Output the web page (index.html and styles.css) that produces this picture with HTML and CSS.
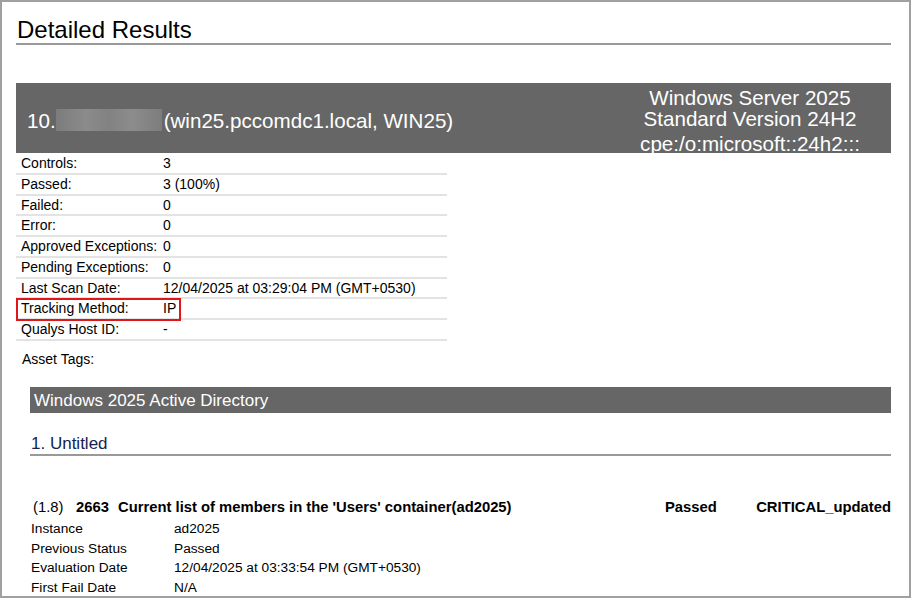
FILE: index.html
```html
<!DOCTYPE html>
<html lang="en">
<head>
    <meta charset="UTF-8">
    <title>Detailed Results</title>
    <link rel="stylesheet" href="styles.css">
</head>
<body>
    <div class="page">
        <h1 class="page-title">Detailed Results</h1>

        <!-- Host header -->
        <div class="host-header">
            <div class="host-name">10.<span class="masked"></span>(win25.pccomdc1.local, WIN25)</div>
            <div class="host-os">
                <div>Windows Server 2025</div>
                <div>Standard Version 24H2</div>
                <div class="host-cpe">cpe:/o:microsoft::24h2:::</div>
            </div>
        </div>

        <!-- Host summary -->
        <div class="stats">
            <div class="stat-row"><span class="stat-label">Controls:</span><span>3</span></div>
            <div class="stat-row"><span class="stat-label">Passed:</span><span>3 (100%)</span></div>
            <div class="stat-row"><span class="stat-label">Failed:</span><span>0</span></div>
            <div class="stat-row"><span class="stat-label">Error:</span><span>0</span></div>
            <div class="stat-row"><span class="stat-label">Approved Exceptions:</span><span>0</span></div>
            <div class="stat-row"><span class="stat-label">Pending Exceptions:</span><span>0</span></div>
            <div class="stat-row"><span class="stat-label">Last Scan Date:</span><span>12/04/2025 at 03:29:04 PM (GMT+0530)</span></div>
            <div class="stat-row highlight"><span class="stat-label">Tracking Method:</span><span>IP</span></div>
            <div class="stat-row"><span class="stat-label">Qualys Host ID:</span><span>-</span></div>
        </div>

        <div class="asset-tags">Asset Tags:</div>

        <!-- Technology section -->
        <div class="section">
            <div class="section-bar">Windows 2025 Active Directory</div>
            <div class="section-title">1. Untitled</div>

            <div class="control-head">
                <span class="control-num">(1.8)</span>
                <span>2663</span>
                <span>Current list of members in the 'Users' container(ad2025)</span>
                <span>Passed</span>
                <span class="control-severity">CRITICAL_updated</span>
            </div>
            <div class="control-details">
                <span>Instance</span><span>ad2025</span>
                <span>Previous Status</span><span>Passed</span>
                <span>Evaluation Date</span><span>12/04/2025 at 03:33:54 PM (GMT+0530)</span>
                <span>First Fail Date</span><span>N/A</span>
            </div>
        </div>
    </div>
</body>
</html>
```

FILE: styles.css
```css
body {
    margin: 0;
    font-family: "Liberation Sans", Arial, sans-serif;
    color: #000;
    background-color: #fff;
}
.page {
    height: 598px;
    box-sizing: border-box;
    border: 2px solid #a0a0a0;
    padding: 0 18px 0 14px;
    overflow: hidden;
}
.page-title {
    margin: 0;
    padding: 15px 0 0 1px;
    font-size: 24px;
    font-weight: normal;
    line-height: 26px;
    border-bottom: 2px solid #999;
}
.host-header {
    margin-top: 38px;
    height: 70px;
    background-color: #666;
    color: #fff;
    display: flex;
    align-items: center;
    justify-content: space-between;
    font-size: 20.6px;
    line-height: 21px;
}
.host-name {
    padding: 3px 0 0 11px;
    white-space: nowrap;
}
.masked {
    display: inline-block;
    width: 106px;
    height: 22px;
    margin-right: 2px;
    vertical-align: -3px;
    background: linear-gradient(90deg, #7c7c7c, #8b8b8b 28%, #828282 50%, #8c8c8c 72%, #7d7d7d);
}
.host-os {
    align-self: flex-start;
    width: 282px;
    padding-top: 3.5px;
    text-align: center;
    white-space: nowrap;
}
.host-cpe {
    margin-top: 4px;
}
.stats {
    width: 431px;
    margin-top: 1px;
    font-size: 14px;
}
.stat-row {
    display: flex;
    line-height: 18.75px;
    border-bottom: 2px solid #e3e3e3;
    position: relative;
}
.stat-label {
    width: 142px;
    padding-left: 5px;
}
/* red annotation box around the tracking method row */
.highlight::after {
    content: "";
    position: absolute;
    left: 0;
    top: -1px;
    width: 165px;
    height: 23px;
    box-sizing: border-box;
    border: 2px solid #e0161b;
}
.asset-tags {
    padding: 9px 0 0 6px;
    font-size: 14px;
    line-height: 18px;
}
.section {
    margin: 19px 0 0 14px;
}
.section-bar {
    background-color: #666;
    color: #fff;
    height: 24px;
    padding: 2px 0 0 4px;
    line-height: 24px;
    font-size: 17px;
}
.section-title {
    margin-top: 21px;
    padding-left: 1px;
    font-size: 17px;
    line-height: 20px;
    color: #14234f;
    border-bottom: 2px solid #999;
}
.control-head {
    margin-top: 41px;
    padding-left: 3px;
    display: grid;
    grid-template-columns: 43px 42px 1fr 91px 135px;
    font-size: 14.8px;
    font-weight: bold;
    line-height: 20px;
    white-space: nowrap;
}
.control-num {
    font-weight: normal;
}
.control-severity {
    text-align: right;
}
.control-details {
    display: grid;
    grid-template-columns: 143px 1fr;
    margin-top: 2px;
    padding-left: 1px;
    font-size: 13.7px;
    line-height: 19.8px;
}
```
